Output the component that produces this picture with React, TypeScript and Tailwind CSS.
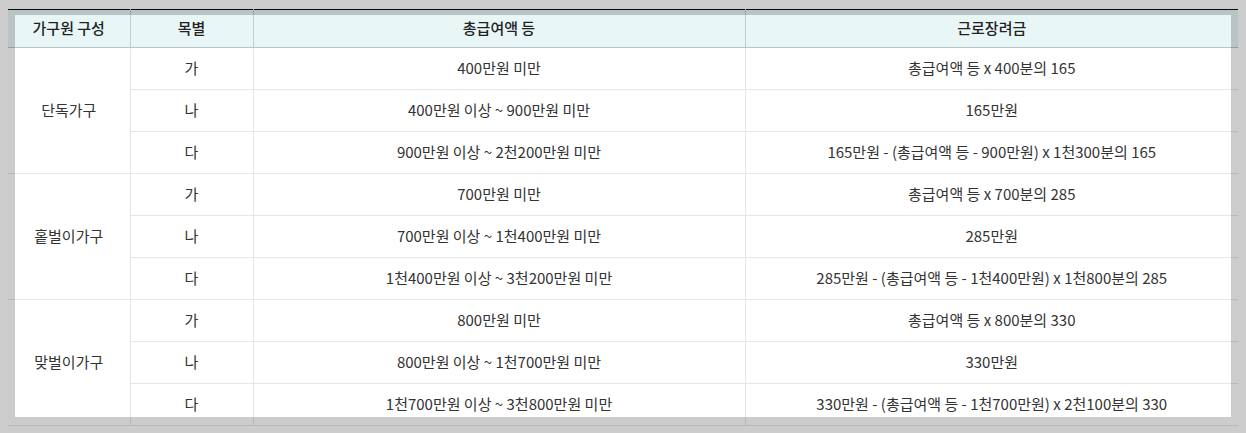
const groups = [
  {
    name: "단독가구",
    rows: [
      ["가", "400만원 미만", "총급여액 등 x 400분의 165"],
      ["나", "400만원 이상 ~ 900만원 미만", "165만원"],
      ["다", "900만원 이상 ~ 2천200만원 미만", "165만원 - (총급여액 등 - 900만원) x 1천300분의 165"],
    ],
  },
  {
    name: "홑벌이가구",
    rows: [
      ["가", "700만원 미만", "총급여액 등 x 700분의 285"],
      ["나", "700만원 이상 ~ 1천400만원 미만", "285만원"],
      ["다", "1천400만원 이상 ~ 3천200만원 미만", "285만원 - (총급여액 등 - 1천400만원) x 1천800분의 285"],
    ],
  },
  {
    name: "맞벌이가구",
    rows: [
      ["가", "800만원 미만", "총급여액 등 x 800분의 330"],
      ["나", "800만원 이상 ~ 1천700만원 미만", "330만원"],
      ["다", "1천700만원 이상 ~ 3천800만원 미만", "330만원 - (총급여액 등 - 1천700만원) x 2천100분의 330"],
    ],
  },
];

export default function App() {
  return (
    <div className="relative h-[433px] overflow-hidden bg-white pt-[9px] px-2 [font-family:'Noto_Sans_CJK_KR','Noto_Sans',sans-serif] text-[15px] text-[#333]">
      <table className="w-[1230px] table-fixed border-collapse border-t border-[#111]">
        <colgroup>
          <col className="w-[122px]" />
          <col className="w-[123px]" />
          <col className="w-[492px]" />
          <col />
        </colgroup>
        <thead>
          <tr className="h-[38px] bg-[#e9f6f6]">
            {["가구원 구성", "목별", "총급여액 등", "근로장려금"].map((h, i) => (
              <th
                key={h}
                className={`border-b border-[#b9c5cc] font-medium text-[#222] ${i > 0 ? "border-l border-l-[#c3ccd2]" : ""}`}
              >
                {h}
              </th>
            ))}
          </tr>
        </thead>
        <tbody>
          {groups.map((g) =>
            g.rows.map((r, j) => (
              <tr key={g.name + j} className="h-[42px]">
                {j === 0 && (
                  <td rowSpan={3} className="border-b border-[#e6e6e6] text-center">
                    {g.name}
                  </td>
                )}
                {r.map((c, k) => (
                  <td key={k} className="border-b border-l border-[#e6e6e6] text-center">
                    {c}
                  </td>
                ))}
              </tr>
            ))
          )}
        </tbody>
      </table>
      {/* dim overlay with a cut-out */}
      <div className="absolute left-[15px] top-[15px] w-[1216px] h-[402px] shadow-[0_0_0_3000px_rgba(0,0,0,0.2)]" />
    </div>
  );
}
